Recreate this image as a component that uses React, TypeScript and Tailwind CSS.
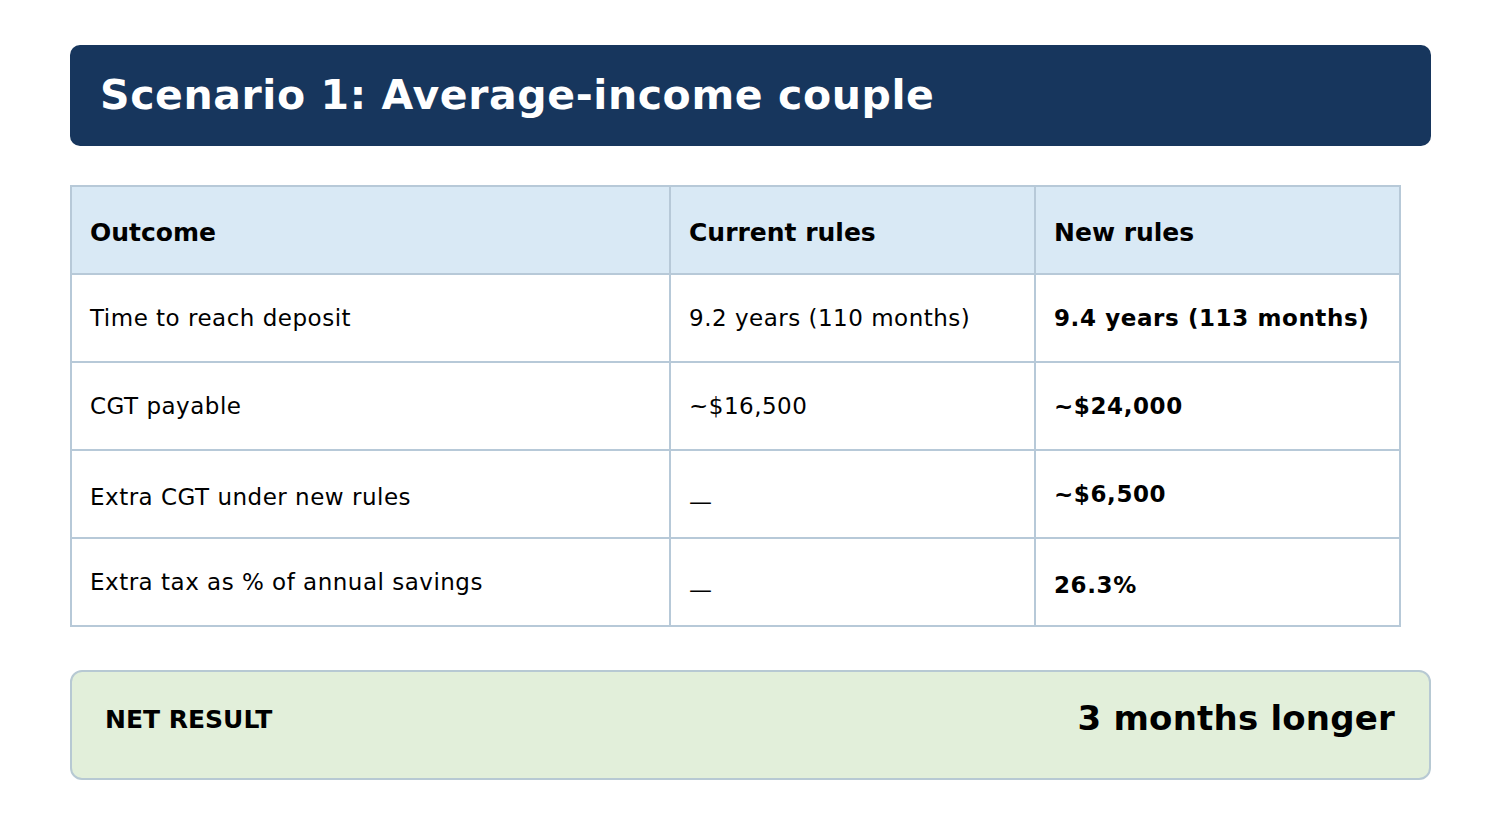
const ROWS = [
  { label: "Time to reach deposit", current: "9.2 years (110 months)", next: "9.4 years (113 months)", lp: "", np: "", dp: "" },
  { label: "CGT payable", current: "~$16,500", next: "~$24,000", lp: "", np: "", dp: "" },
  { label: "Extra CGT under new rules", current: "—", next: "~$6,500", lp: "pt-[6px]", np: "", dp: "pt-[16px]" },
  { label: "Extra tax as % of annual savings", current: "—", next: "26.3%", lp: "", np: "pt-[6px]", dp: "pt-[16px]" },
];

const cell = "border-2 border-[#b7c9d8] px-[18px]";

export default function App() {
  return (
    <div className="w-[1500px] h-[820px] bg-white pl-[70px] pt-[45px] font-['DejaVu_Sans',sans-serif] text-black">
      <div className="w-[1361px] h-[101px] rounded-[10px] bg-[#17365d] flex items-center px-[30px]">
        <h1 className="text-[41px] font-bold text-white leading-none tracking-[0.6px]">Scenario 1: Average-income couple</h1>
      </div>

      <table className="mt-[39px] w-[1329px] border-collapse table-fixed text-[23px] tracking-[0.5px]">
        <colgroup>
          <col className="w-[599px]" />
          <col className="w-[365px]" />
          <col className="w-[365px]" />
        </colgroup>
        <thead>
          <tr className="h-[88px] bg-[#d9e9f5] text-[25px] tracking-normal">
            <th className={`${cell} pt-[6px] text-left font-bold`}>Outcome</th>
            <th className={`${cell} pt-[6px] text-left font-bold`}>Current rules</th>
            <th className={`${cell} pt-[6px] text-left font-bold`}>New rules</th>
          </tr>
        </thead>
        <tbody>
          {ROWS.map((r) => (
            <tr key={r.label} className="h-[88px]">
              <td className={`${cell} ${r.lp}`}>{r.label}</td>
              <td className={`${cell} ${r.dp}`}>{r.current}</td>
              <td className={`${cell} ${r.np} font-bold tracking-[0.6px]`}>{r.next}</td>
            </tr>
          ))}
        </tbody>
      </table>

      <div className="mt-[43px] w-[1361px] h-[110px] rounded-[12px] border-2 border-[#b7c9d3] bg-[#e2efda] flex items-center justify-between pl-[33px] pr-[34px] pb-[10px]">
        <span className="text-[25px] font-bold">NET RESULT</span>
        <span className="text-[34px] font-bold tracking-[0.2px] mb-[4px]">3 months longer</span>
      </div>
    </div>
  );
}
